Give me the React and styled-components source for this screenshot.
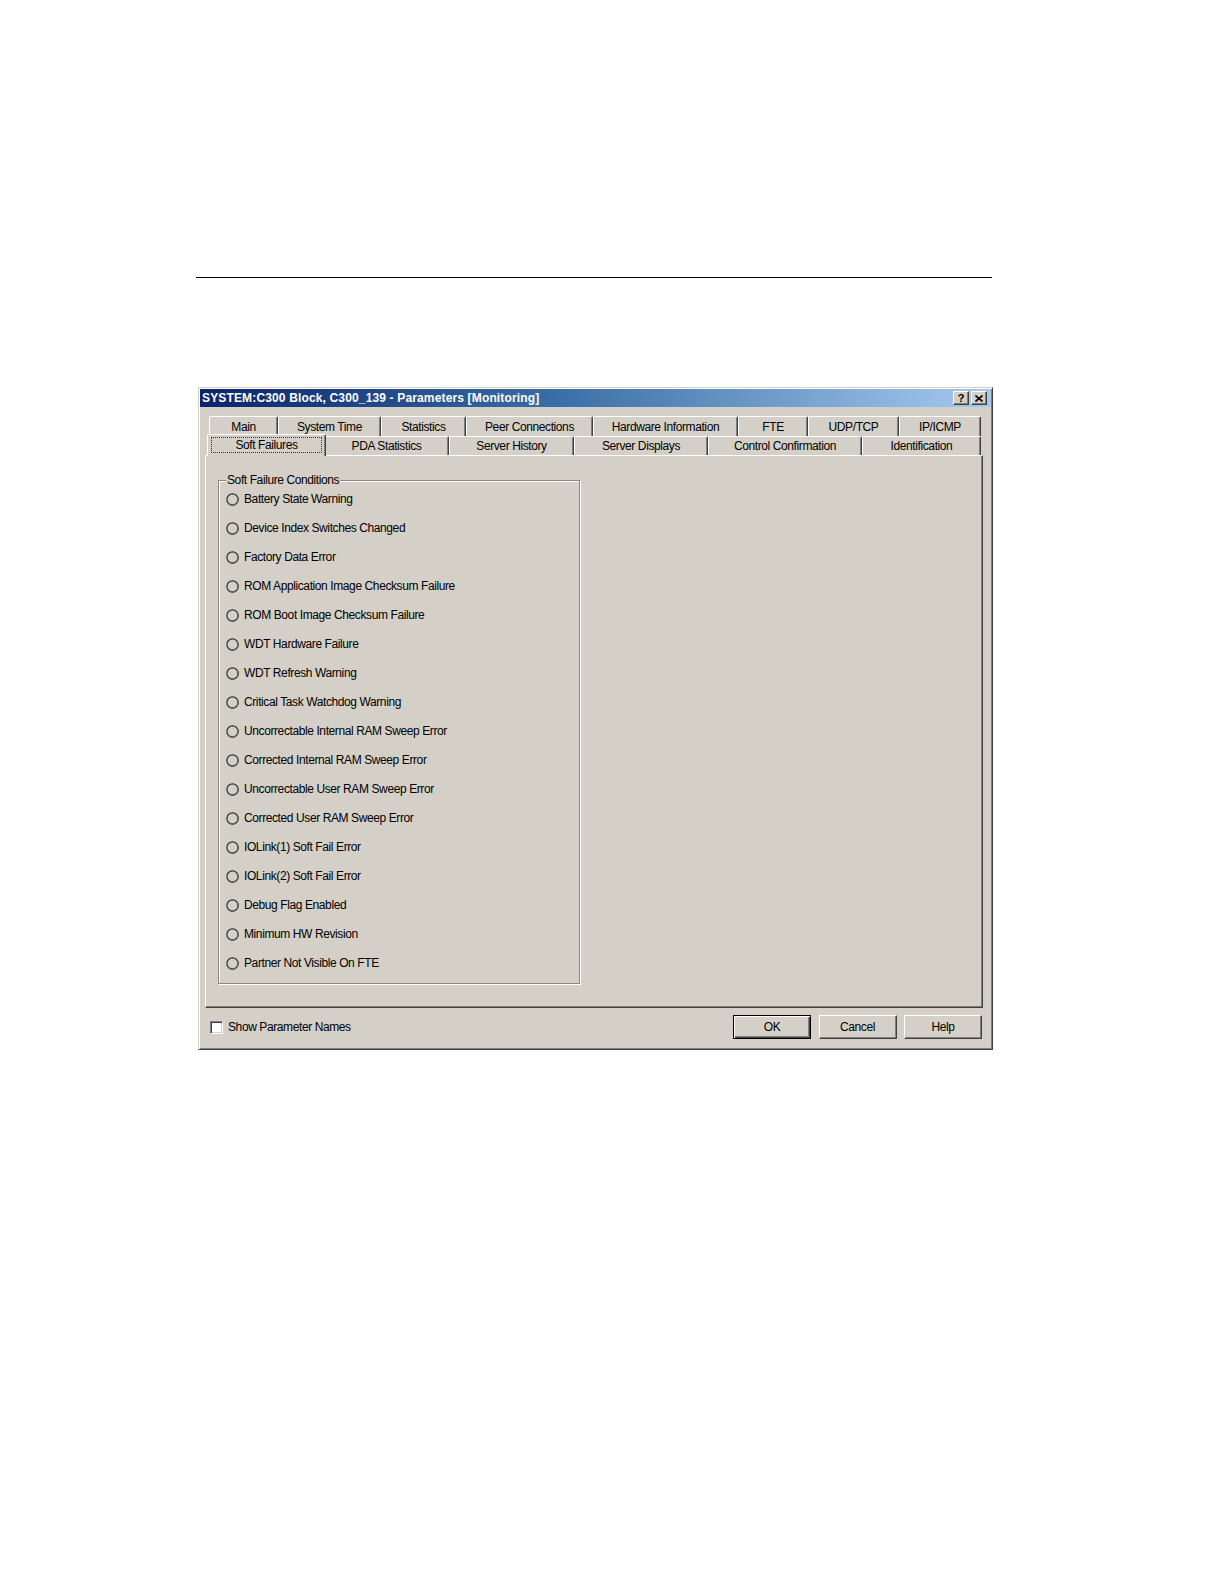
import styled, { createGlobalStyle } from 'styled-components';

const GlobalStyle = createGlobalStyle`
  html, body {
    margin: 0;
    padding: 0;
    background: #fff;
  }
  body {
    font-family: "Liberation Sans", Arial, sans-serif;
  }
`;

const Page = styled.div`
  width: 1224px;
  min-height: 1584px;
  box-sizing: border-box;
  padding: 277px 0 0 196px;
`;

const Rule = styled.div`
  width: 796px;
  height: 1px;
  background: #000;
`;

const Dialog = styled.div`
  margin: 109px 0 0 2px;
  width: 795px;
  height: 663px;
  box-sizing: border-box;
  padding: 1px;
  display: flex;
  flex-direction: column;
  background: #d4d0c8;
  border: 1px solid;
  border-color: #d4d0c8 #404040 #404040 #d4d0c8;
  box-shadow: inset 1px 1px 0 #fff, inset -1px -1px 0 #808080;
  color: #000;
  font-size: 12px;
  letter-spacing: -0.4px;
`;

const TitleBar = styled.div`
  height: 18px;
  display: flex;
  align-items: center;
  justify-content: space-between;
  padding: 0 4px 0 2px;
  background: linear-gradient(to right, #0a246a 0%, #3a6ea5 45%, #a6caf0 100%);
`;

const Title = styled.span`
  color: #fff;
  font-weight: bold;
  font-size: 12px;
  letter-spacing: 0.15px;
`;

const CaptionButtons = styled.div`
  display: flex;
  gap: 2px;
`;

const CaptionButton = styled.div`
  width: 16px;
  height: 14px;
  box-sizing: border-box;
  display: flex;
  align-items: center;
  justify-content: center;
  background: #d4d0c8;
  border: 1px solid;
  border-color: #fff #404040 #404040 #fff;
  box-shadow: inset -1px -1px 0 #808080;
  font-weight: bold;
  font-size: 11px;
  letter-spacing: 0;
  line-height: 1;
`;

const Body = styled.div`
  flex: 1;
  display: flex;
  flex-direction: column;
  padding: 9px 8px 9px 5px;
`;

const TabStrip = styled.div`
  display: flex;
  flex-direction: column;
  padding: 0 2px 0 4px;
`;

const TabRow = styled.div`
  display: flex;
  height: 19.5px;
`;

const Tab = styled.div`
  position: relative;
  width: ${(p) => (p.$active ? p.$w + 4 : p.$w)}px;
  height: ${(p) => (p.$active ? 22.5 : 19.5)}px;
  margin: ${(p) => (p.$active ? '-2px -2px -1px -2px' : '0')};
  z-index: ${(p) => (p.$active ? 1 : 0)};
  box-sizing: border-box;
  display: flex;
  align-items: center;
  justify-content: center;
  padding: ${(p) => (p.$active ? '2px 3px 3px 3px' : '1px 0 0 0')};
  background: #d4d0c8;
  border-top: 1px solid #fff;
  border-left: 1px solid #fff;
  border-right: 1px solid #404040;
  border-radius: 2px 2px 0 0;
  box-shadow: inset -1px 0 0 #808080;
  white-space: nowrap;
`;

const Focus = styled.span`
  flex: 1;
  align-self: stretch;
  display: flex;
  align-items: center;
  justify-content: center;
  border: 1px dotted #333;
`;

const Panel = styled.div`
  height: 553px;
  box-sizing: border-box;
  padding: 18px 0 0 12px;
  border: 1px solid;
  border-color: #fff #404040 #404040 #fff;
  box-shadow: inset -1px -1px 0 #808080;
`;

const Group = styled.fieldset`
  margin: 0;
  width: 362px;
  height: 510px;
  box-sizing: border-box;
  padding: 0 0 0 7px;
  border: 1px solid #8a8780;
  box-shadow: 1px 1px 0 #fff, inset 1px 1px 0 #fff;
  display: flex;
  flex-direction: column;
  gap: 13px;
`;

const Legend = styled.legend`
  padding: 0 1px;
  line-height: 13px;
  margin-bottom: 4px;
  background: #d4d0c8;
`;

const OptionRow = styled.div`
  height: 16px;
  display: flex;
  align-items: center;
  gap: 5px;
  white-space: nowrap;
`;

const Footer = styled.div`
  margin-top: 7px;
  height: 24px;
  display: flex;
  align-items: center;
  padding: 0 1px 0 5px;
`;

const CheckLabel = styled.label`
  display: flex;
  align-items: center;
  gap: 5px;
`;

const CheckBox = styled.span`
  width: 13px;
  height: 13px;
  box-sizing: border-box;
  background: #fff;
  border: 1px solid;
  border-color: #808080 #fff #fff #808080;
  box-shadow: inset 1px 1px 0 #404040, inset -1px -1px 0 #d4d0c8;
`;

const Buttons = styled.div`
  margin-left: auto;
  display: flex;
  gap: 7.5px;
`;

const Button = styled.div`
  width: 78px;
  height: 24px;
  box-sizing: border-box;
  display: flex;
  align-items: center;
  justify-content: center;
  background: #d4d0c8;
  border: 1px solid;
  border-color: ${(p) => (p.$default ? '#000' : '#fff #404040 #404040 #fff')};
  box-shadow: ${(p) =>
    p.$default
      ? 'inset 1px 1px 0 #fff, inset -1px -1px 0 #404040, inset -2px -2px 0 #808080'
      : 'inset -1px -1px 0 #808080'};
`;

const Radio = () => (
  <svg width="13" height="13" viewBox="0 0 13 13">
    <circle cx="6.5" cy="6.5" r="5.6" fill="#d4d0c8" stroke="#2e2e2e" strokeWidth="1.2" />
    <path d="M10.5 2.5 A5.6 5.6 0 0 1 2.5 10.5" fill="none" stroke="#5e5e5e" strokeWidth="1.2" />
  </svg>
);

const CloseGlyph = () => (
  <svg width="8" height="7" viewBox="0 0 8 7">
    <path d="M0.5 0.5 L7.5 6.5 M7.5 0.5 L0.5 6.5" stroke="#000" strokeWidth="1.6" />
  </svg>
);

const tabRows = [
  [
    ['Main', 69],
    ['System Time', 103],
    ['Statistics', 85],
    ['Peer Connections', 127],
    ['Hardware Information', 145],
    ['FTE', 70],
    ['UDP/TCP', 91],
    ['IP/ICMP', 82],
  ],
  [
    ['Soft Failures', 115],
    ['PDA Statistics', 125],
    ['Server History', 125],
    ['Server Displays', 134],
    ['Control Confirmation', 154],
    ['Identification', 119],
  ],
];

const conditions = [
  'Battery State Warning',
  'Device Index Switches Changed',
  'Factory Data Error',
  'ROM Application Image Checksum Failure',
  'ROM Boot Image Checksum Failure',
  'WDT Hardware Failure',
  'WDT Refresh Warning',
  'Critical Task Watchdog Warning',
  'Uncorrectable Internal RAM Sweep Error',
  'Corrected Internal RAM Sweep Error',
  'Uncorrectable User RAM Sweep Error',
  'Corrected User RAM Sweep Error',
  'IOLink(1) Soft Fail Error',
  'IOLink(2) Soft Fail Error',
  'Debug Flag Enabled',
  'Minimum HW Revision',
  'Partner Not Visible On FTE',
];

export default function App() {
  const active = 'Soft Failures';

  return (
    <Page>
      <GlobalStyle />
      <Rule />
      <Dialog>
        <TitleBar>
          <Title>SYSTEM:C300 Block, C300_139 - Parameters [Monitoring]</Title>
          <CaptionButtons>
            <CaptionButton>?</CaptionButton>
            <CaptionButton>
              <CloseGlyph />
            </CaptionButton>
          </CaptionButtons>
        </TitleBar>
        <Body>
          <TabStrip>
            {tabRows.map((row, i) => (
              <TabRow key={i}>
                {row.map(([label, w]) => (
                  <Tab key={label} $w={w} $active={label === active}>
                    {label === active ? <Focus>{label}</Focus> : label}
                  </Tab>
                ))}
              </TabRow>
            ))}
          </TabStrip>
          <Panel>
            <Group>
              <Legend>Soft Failure Conditions</Legend>
              {conditions.map((c) => (
                <OptionRow key={c}>
                  <Radio />
                  {c}
                </OptionRow>
              ))}
            </Group>
          </Panel>
          <Footer>
            <CheckLabel>
              <CheckBox />
              Show Parameter Names
            </CheckLabel>
            <Buttons>
              <Button $default>OK</Button>
              <Button>Cancel</Button>
              <Button>Help</Button>
            </Buttons>
          </Footer>
        </Body>
      </Dialog>
    </Page>
  );
}
